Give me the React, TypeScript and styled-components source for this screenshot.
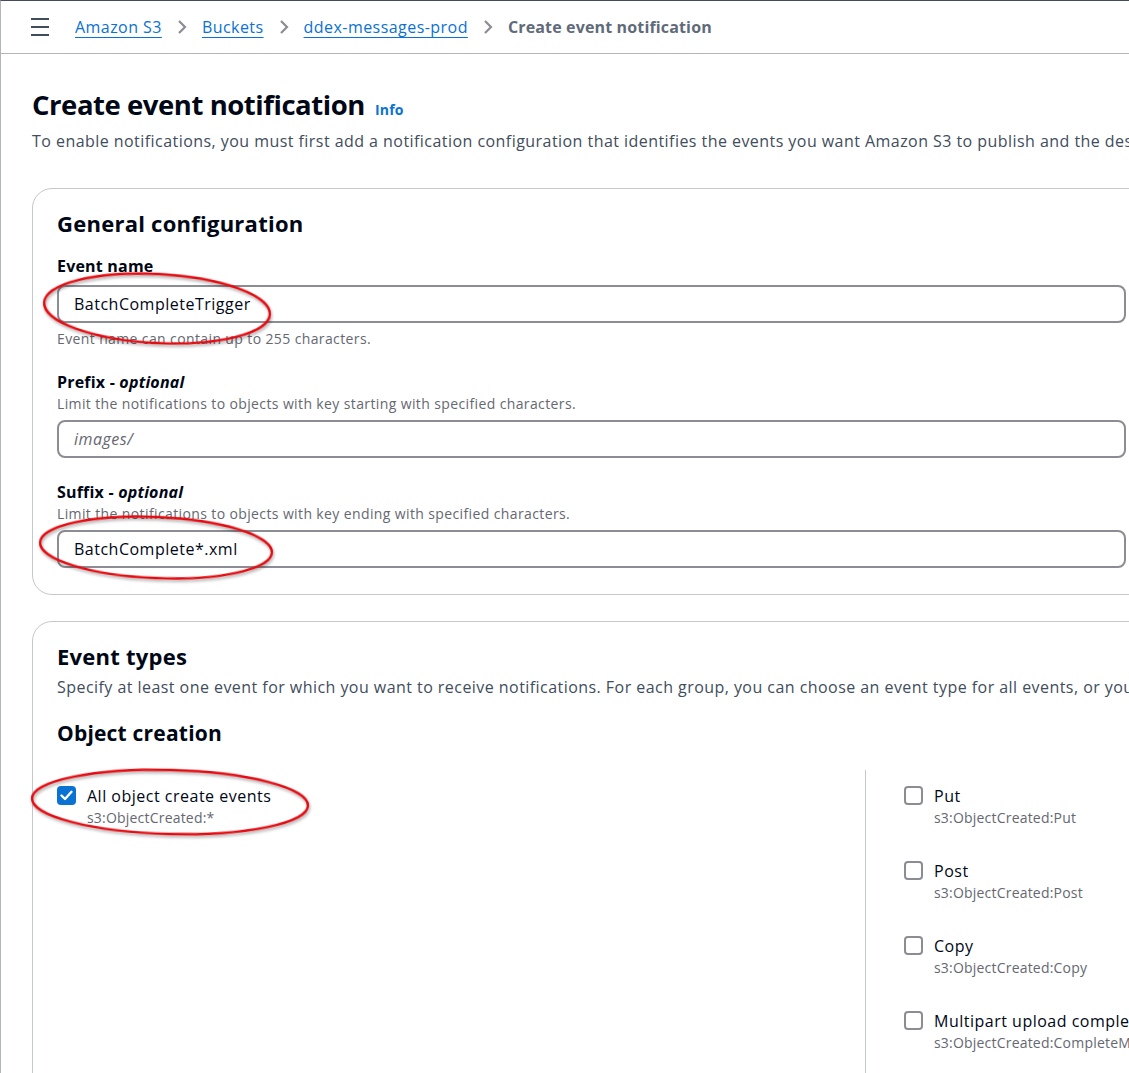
import React from "react";
import styled, { createGlobalStyle } from "styled-components";

const GlobalStyle = createGlobalStyle`
  html, body { margin: 0; padding: 0; background: #ffffff; }
  body { font-family: "Open Sans", "Noto Sans", "Liberation Sans", sans-serif; color: #000716; }
  * { box-sizing: border-box; }
`;

const Shell = styled.div`
  width: 100vw;
  height: 1073px;
  overflow: hidden;
  border-left: 1px solid #b4b4bb;
  border-top: 1px solid #414d5c;
  background: #fff;
`;

const TopBar = styled.header`
  height: 53px;
  display: flex;
  align-items: center;
  padding-left: 30px;
  border-bottom: 1px solid #b4b4bb;
  gap: 24px;
`;

const Burger = styled.button`
  width: 20px;
  height: 18px;
  padding: 0;
  border: 0;
  background: transparent;
  display: flex;
  flex-direction: column;
  justify-content: space-between;
  margin-top: -1px;
  span {
    display: block;
    height: 2px;
    width: 18px;
    background: #414d5c;
  }
`;

const Crumbs = styled.nav`
  display: flex;
  align-items: center;
  gap: 14px;
  font-size: 16px;
  white-space: nowrap;
`;

const CrumbLink = styled.a`
  color: #0972d3;
  letter-spacing: 0.45px;
  text-decoration: underline;
  text-underline-offset: 4px;
  text-decoration-thickness: 1px;
`;

const CrumbCurrent = styled.span`
  color: #5f6b7a;
  font-weight: 700;
  letter-spacing: 0.15px;
`;

const Chevron = styled.svg`
  width: 12px;
  height: 16px;
  flex: none;
`;

const Main = styled.main`
  padding: 33px 0 0 31px;
`;

const TitleRow = styled.div`
  display: flex;
  align-items: baseline;
  gap: 10px;
`;

const Title = styled.h1`
  margin: 0;
  font-size: 27.5px;
  line-height: 36px;
  font-weight: 700;
  color: #000716;
  letter-spacing: -0.45px;
`;

const InfoLink = styled.a`
  font-size: 14px;
  font-weight: 700;
  color: #0972d3;
  letter-spacing: 0.2px;
`;

const Lead = styled.p`
  margin: 6px 0 0;
  font-size: 16px;
  line-height: 24px;
  color: #414d5c;
  white-space: nowrap;
  letter-spacing: 0.45px;
`;

const Card = styled.section<{ $top: number }>`
  margin-top: ${(p) => p.$top}px;
  margin-right: -22px;
  border: 1px solid #c6c6cd;
  border-radius: 20px;
  padding: 19px 24px 20px 24px;
  background: #fff;
`;

const CardTitle = styled.h2`
  margin: 0;
  font-size: 22px;
  line-height: 30px;
  font-weight: 700;
  color: #000716;
  letter-spacing: 0.25px;
`;

const CardLead = styled.p`
  margin: 4px 0 0;
  font-size: 16px;
  line-height: 24px;
  color: #414d5c;
  white-space: nowrap;
  letter-spacing: 0.45px;
`;

const Field = styled.div<{ $top: number }>`
  margin-top: ${(p) => p.$top}px;
  display: flex;
  flex-direction: column;
`;

const Label = styled.label`
  font-size: 16px;
  line-height: 24px;
  font-weight: 700;
  color: #000716;
  letter-spacing: 0.2px;
  em { font-weight: 700; }
`;

const Hint = styled.div`
  font-size: 14px;
  line-height: 20px;
  color: #656871;
  white-space: nowrap;
  letter-spacing: 0.38px;
`;

const InputWrap = styled.div<{ $gap: number }>`
  position: relative;
  margin-top: ${(p) => p.$gap}px;
  margin-bottom: 6px;
`;

const TextInput = styled.input`
  width: 100%;
  height: 38px;
  border: 2px solid #8c8c94;
  border-radius: 8px;
  padding: 0 15px;
  font-family: inherit;
  font-size: 16px;
  letter-spacing: 0.5px;
  color: #000716;
  background: #fff;
  outline: none;
  &::placeholder {
    font-style: italic;
    color: #656871;
  }
`;

const Ring = styled.svg`
  position: absolute;
  overflow: visible;
  pointer-events: none;
  filter: drop-shadow(1px 2px 1.5px rgba(0, 0, 0, 0.35));
`;

const SubTitle = styled.h3`
  margin: 20px 0 0;
  font-size: 21px;
  line-height: 28px;
  font-weight: 700;
  color: #000716;
  letter-spacing: 0.2px;
`;

const EventGrid = styled.div`
  margin-top: 23px;
  display: grid;
  grid-template-columns: 808px 1fr;
  min-height: 320px;
`;

const Column = styled.div<{ $divided?: boolean }>`
  display: flex;
  flex-direction: column;
  gap: 31px;
  padding-top: 15px;
  padding-left: ${(p) => (p.$divided ? "38px" : "0")};
  border-left: ${(p) => (p.$divided ? "1px solid #c6c6cd" : "none")};
`;

const Option = styled.div`
  position: relative;
  display: flex;
  align-items: flex-start;
  gap: 11px;
`;

const Box = styled.span<{ $checked?: boolean }>`
  flex: none;
  width: 19px;
  height: 19px;
  margin-top: 1px;
  border-radius: 4px;
  border: ${(p) => (p.$checked ? "none" : "2px solid #8c8c94")};
  background: ${(p) => (p.$checked ? "#0972d3" : "#fff")};
  display: flex;
  align-items: center;
  justify-content: center;
`;

const OptionText = styled.div`
  display: flex;
  flex-direction: column;
  white-space: nowrap;
`;

const OptionLabel = styled.span`
  font-size: 16px;
  line-height: 22px;
  color: #000716;
  letter-spacing: 0.5px;
`;

const OptionSub = styled.span`
  font-size: 14px;
  line-height: 22px;
  color: #656871;
  letter-spacing: 0.2px;
`;

type RingProps = { left: number; top: number; w: number; h: number; rot: number };

const Annotation: React.FC<RingProps> = ({ left, top, w, h, rot }) => (
  <Ring
    width={w}
    height={h}
    viewBox={`0 0 ${w} ${h}`}
    style={{ left, top, transform: `rotate(${rot}deg)` }}
  >
    <ellipse
      cx={w / 2}
      cy={h / 2}
      rx={w / 2 - 4}
      ry={h / 2 - 4}
      fill="none"
      stroke="#e8090f"
      strokeWidth={2.4}
    />
  </Ring>
);

const ChevronIcon = () => (
  <Chevron viewBox="0 0 12 16">
    <path d="M3 2 L9 8 L3 14" fill="none" stroke="#8c8c94" strokeWidth="2.2" />
  </Chevron>
);

const Check = () => (
  <svg width="13" height="11" viewBox="0 0 13 11">
    <path d="M1.5 5.5 L5 9 L11.5 1.8" fill="none" stroke="#fff" strokeWidth="2.4" strokeLinecap="round" strokeLinejoin="round" />
  </svg>
);

type Opt = { label: string; sub: string };
const rightOptions: Opt[] = [
  { label: "Put", sub: "s3:ObjectCreated:Put" },
  { label: "Post", sub: "s3:ObjectCreated:Post" },
  { label: "Copy", sub: "s3:ObjectCreated:Copy" },
  { label: "Multipart upload completed", sub: "s3:ObjectCreated:CompleteMultipartUpload" },
];

export default function App() {
  return (
    <>
      <GlobalStyle />
      <Shell>
        <TopBar>
          <Burger aria-label="Menu">
            <span />
            <span />
            <span />
          </Burger>
          <Crumbs>
            <CrumbLink>Amazon S3</CrumbLink>
            <ChevronIcon />
            <CrumbLink>Buckets</CrumbLink>
            <ChevronIcon />
            <CrumbLink>ddex-messages-prod</CrumbLink>
            <ChevronIcon />
            <CrumbCurrent>Create event notification</CrumbCurrent>
          </Crumbs>
        </TopBar>
        <Main>
          <TitleRow>
            <Title>Create event notification</Title>
            <InfoLink>Info</InfoLink>
          </TitleRow>
          <Lead>
            To enable notifications, you must first add a notification configuration that identifies the events you want Amazon S3 to publish and the destinations where you want Amazon S3 to send the notifications.
          </Lead>

          <Card $top={35}>
            <CardTitle>General configuration</CardTitle>
            <Field $top={16}>
              <Label>Event name</Label>
              <InputWrap $gap={7}>
                <TextInput defaultValue="BatchCompleteTrigger" />
                <Annotation left={-17} top={-15} w={234} h={77} rot={3} />
              </InputWrap>
              <Hint>Event name can contain up to 255 characters.</Hint>
            </Field>
            <Field $top={21}>
              <Label>
                Prefix - <em>optional</em>
              </Label>
              <Hint>Limit the notifications to objects with key starting with specified characters.</Hint>
              <InputWrap $gap={6}>
                <TextInput placeholder="images/" />
              </InputWrap>
            </Field>
            <Field $top={16}>
              <Label>
                Suffix - <em>optional</em>
              </Label>
              <Hint>Limit the notifications to objects with key ending with specified characters.</Hint>
              <InputWrap $gap={6}>
                <TextInput defaultValue="BatchComplete*.xml" />
                <Annotation left={-21} top={-17} w={240} h={69} rot={2.5} />
              </InputWrap>
            </Field>
          </Card>

          <Card $top={26}>
            <CardTitle>Event types</CardTitle>
            <CardLead>
              Specify at least one event for which you want to receive notifications. For each group, you can choose an event type for all events, or you can choose one or more individual events.
            </CardLead>
            <SubTitle>Object creation</SubTitle>
            <EventGrid>
              <Column>
                <Option>
                  <Box $checked>
                    <Check />
                  </Box>
                  <OptionText>
                    <OptionLabel>All object create events</OptionLabel>
                    <OptionSub>s3:ObjectCreated:*</OptionSub>
                  </OptionText>
                  <Annotation left={-29} top={-19} w={284} h={72} rot={1.5} />
                </Option>
              </Column>
              <Column $divided>
                {rightOptions.map((o) => (
                  <Option key={o.label}>
                    <Box />
                    <OptionText>
                      <OptionLabel>{o.label}</OptionLabel>
                      <OptionSub>{o.sub}</OptionSub>
                    </OptionText>
                  </Option>
                ))}
              </Column>
            </EventGrid>
          </Card>
        </Main>
      </Shell>
    </>
  );
}
